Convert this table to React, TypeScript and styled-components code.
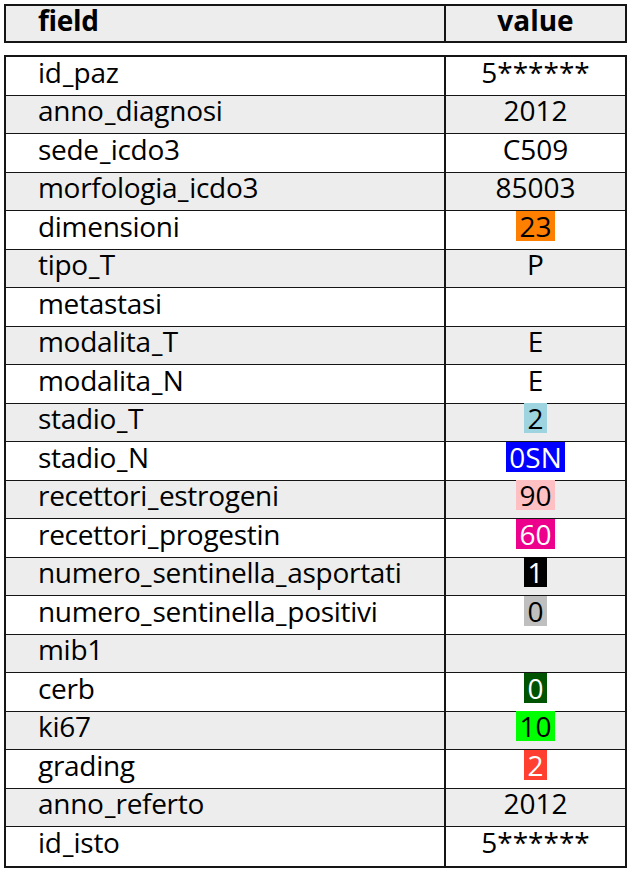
import React from 'react';
import styled, { createGlobalStyle } from 'styled-components';

const GlobalStyle = createGlobalStyle`
  body {
    margin: 0;
    background: #ffffff;
    font-family: 'Open Sans', 'DejaVu Sans', sans-serif;
    color: #000000;
  }
`;

const StyledPage = styled.div`
  padding: 4px 0 0 4px;
  width: 623px;
  display: flex;
  flex-direction: column;
  gap: 12px;
`;

const StyledTable = styled.div`
  border: 2px solid #151515;
  display: flex;
  flex-direction: column;
`;

const StyledRow = styled.div<{ shaded?: boolean; head?: boolean }>`
  display: grid;
  grid-template-columns: 440px 1fr;
  height: ${({ head }) => (head ? '35px' : '38.5px')};
  box-sizing: border-box;
  background: ${({ shaded }) => (shaded ? '#ededed' : '#ffffff')};
  border-bottom: 1.5px solid #151515;
  font-weight: ${({ head }) => (head ? 700 : 400)};
  font-size: 28px;
  line-height: 1;
  &:last-child {
    border-bottom: none;
  }
`;

const StyledField = styled.div`
  display: flex;
  align-items: center;
  min-height: 0;
  padding: 0 0 8px 32px;
  border-right: 2px solid #151515;
  letter-spacing: -0.3px;
  white-space: nowrap;
`;

const StyledValue = styled.div`
  display: flex;
  align-items: center;
  justify-content: center;
  min-height: 0;
  padding-bottom: 8px;
`;

const StyledUnderscore = styled.span`
  display: inline-block;
  vertical-align: 0.24em;
  transform: scaleX(0.85);
`;

const StyledBadge = styled.span<{ bg: string; fg: string }>`
  display: inline-block;
  background: ${({ bg }) => bg};
  color: ${({ fg }) => fg};
  padding: 0 3px;
  height: 30px;
  line-height: 30px;
`;

interface IRow {
  field: string;
  value: string;
  bg?: string;
  fg?: string;
}

const rows: IRow[] = [
  { field: 'id_paz', value: '5******' },
  { field: 'anno_diagnosi', value: '2012' },
  { field: 'sede_icdo3', value: 'C509' },
  { field: 'morfologia_icdo3', value: '85003' },
  { field: 'dimensioni', value: '23', bg: '#ff8000', fg: '#000' },
  { field: 'tipo_T', value: 'P' },
  { field: 'metastasi', value: '' },
  { field: 'modalita_T', value: 'E' },
  { field: 'modalita_N', value: 'E' },
  { field: 'stadio_T', value: '2', bg: '#9dd4e0', fg: '#000' },
  { field: 'stadio_N', value: '0SN', bg: '#0000ff', fg: '#fff' },
  { field: 'recettori_estrogeni', value: '90', bg: '#ffc0c4', fg: '#000' },
  { field: 'recettori_progestin', value: '60', bg: '#ec008c', fg: '#fff' },
  { field: 'numero_sentinella_asportati', value: '1', bg: '#000000', fg: '#fff' },
  { field: 'numero_sentinella_positivi', value: '0', bg: '#bfbfbf', fg: '#000' },
  { field: 'mib1', value: '' },
  { field: 'cerb', value: '0', bg: '#005300', fg: '#fff' },
  { field: 'ki67', value: '10', bg: '#00ff00', fg: '#000' },
  { field: 'grading', value: '2', bg: '#ff4030', fg: '#fff' },
  { field: 'anno_referto', value: '2012' },
  { field: 'id_isto', value: '5******' }
];

const renderField = (name: string) =>
  name.split('_').map((part, i) => (
    <React.Fragment key={i}>
      {i > 0 && <StyledUnderscore>_</StyledUnderscore>}
      {part}
    </React.Fragment>
  ));

const App: React.FC = () => {
  return (
    <>
      <GlobalStyle />
      <StyledPage>
        <StyledTable>
          <StyledRow head shaded>
            <StyledField>field</StyledField>
            <StyledValue>value</StyledValue>
          </StyledRow>
        </StyledTable>
        <StyledTable>
          {rows.map((row, i) => (
            <StyledRow key={row.field} shaded={i % 2 === 1}>
              <StyledField>{renderField(row.field)}</StyledField>
              <StyledValue>
                {row.bg ? (
                  <StyledBadge bg={row.bg} fg={row.fg || '#000'}>
                    {row.value}
                  </StyledBadge>
                ) : (
                  row.value
                )}
              </StyledValue>
            </StyledRow>
          ))}
        </StyledTable>
      </StyledPage>
    </>
  );
};

export default App;
